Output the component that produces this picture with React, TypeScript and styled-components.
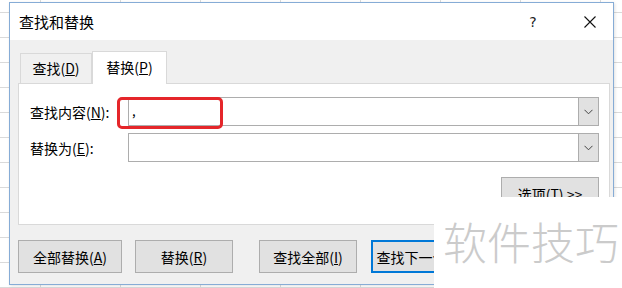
import React from "react";
import styled, { createGlobalStyle } from "styled-components";

const Global = createGlobalStyle`
  html, body { margin: 0; padding: 0; background: #fff; }
  body { width: 622px; height: 288px; overflow: hidden; }
  * { box-sizing: border-box; }
`;

const FONT = `"Noto Sans CJK SC", "Noto Sans", sans-serif`;

const Sheet = styled.div`
  position: relative;
  width: 622px;
  height: 288px;
  overflow: hidden;
  padding: 2px 0 0 9px;
  font-family: ${FONT};
  background-color: #fff;
  background-image:
    repeating-linear-gradient(to right, transparent 0 40px, #dadada 40px 41px, transparent 41px 80px),
    repeating-linear-gradient(to bottom, transparent 0 12px, #dadada 12px 13px, transparent 13px 25px);
`;

const Dialog = styled.div`
  width: 605px;
  height: 283px;
  border: 1px solid #86acd6;
  background: #f0f0f0;
  display: flex;
  flex-direction: column;
  box-shadow: 1px 1px 3px rgba(0, 0, 0, 0.12);
`;

const TitleBar = styled.div`
  height: 37px;
  background: #fff;
  display: flex;
  align-items: center;
  padding-left: 9px;
  flex-shrink: 0;
`;

const Title = styled.div`
  flex: 1;
  font-size: 15px;
  color: #000;
  line-height: 1;
`;

const CaptionButton = styled.div<{ $gap?: number }>`
  width: 46px;
  height: 37px;
  display: flex;
  align-items: center;
  justify-content: center;
  font-size: 14px;
  font-family: "DejaVu Sans", sans-serif;
  color: #222;
  margin-left: ${(p) => p.$gap ?? 0}px;
`;

const TabRow = styled.div`
  height: 43px;
  display: flex;
  align-items: flex-end;
  padding-left: 10px;
  flex-shrink: 0;
`;

const Tab = styled.div<{ $active?: boolean; $width: number }>`
  width: ${(p) => p.$width}px;
  height: ${(p) => (p.$active ? 33 : 30)}px;
  margin-bottom: ${(p) => (p.$active ? -1 : 0)}px;
  position: relative;
  z-index: ${(p) => (p.$active ? 2 : 1)};
  background: ${(p) => (p.$active ? "#fff" : "#f0f0f0")};
  border: 1px solid #d9d9d9;
  border-bottom: none;
  display: flex;
  align-items: center;
  justify-content: center;
  font-size: 14px;
  color: #000;
  padding-bottom: ${(p) => (p.$active ? 3 : 1)}px;
`;

const Panel = styled.div`
  height: 142px;
  margin: 0 3px 0 8px;
  background: #fff;
  border: 1px solid #d9d9d9;
  padding: 13px 10px 0 11px;
  display: flex;
  flex-direction: column;
  flex-shrink: 0;
  overflow: hidden;
`;

const FieldGrid = styled.div`
  display: grid;
  grid-template-columns: 98px 1fr;
  row-gap: 7px;
  align-items: center;
`;

const Label = styled.div`
  font-size: 14px;
  color: #000;
  white-space: nowrap;
`;

const Combo = styled.div`
  height: 29px;
  border: 1px solid #adadad;
  background: #fff;
  display: flex;
`;

const ComboText = styled.div`
  flex: 1;
  font-size: 13px;
  padding-left: 3px;
  line-height: 26px;
  color: #000;
`;

const ComboArrow = styled.div`
  width: 20px;
  background: #e1e1e1;
  border-left: 1px solid #adadad;
  display: flex;
  align-items: center;
  justify-content: center;
`;

const OptionsRow = styled.div`
  display: flex;
  justify-content: flex-end;
  margin-top: 15px;
`;

const Button = styled.div<{ $width: number; $default?: boolean; $gap?: number }>`
  width: ${(p) => p.$width}px;
  height: 33px;
  margin-left: ${(p) => p.$gap ?? 0}px;
  background: #e1e1e1;
  border: ${(p) => (p.$default ? "2px solid #0078d7" : "1px solid #adadad")};
  display: flex;
  align-items: center;
  justify-content: center;
  font-size: 14px;
  color: #000;
  white-space: nowrap;
  flex-shrink: 0;
`;

const ButtonRow = styled.div`
  display: flex;
  margin-top: 15px;
  padding-left: 8px;
`;

const Highlight = styled.div`
  position: absolute;
  left: 117px;
  top: 97px;
  width: 106px;
  height: 32px;
  border: 3px solid #e5262a;
  border-radius: 5px;
  z-index: 5;
`;

const Watermark = styled.div`
  position: absolute;
  left: 434px;
  top: 197px;
  right: 0;
  bottom: 0;
  background: #fff;
  z-index: 6;
  padding: 18px 0 0 9px;
  font-family: ${FONT};
  font-size: 44px;
  font-weight: 300;
  line-height: 1.2;
  color: #cbcbcb;
  white-space: nowrap;
`;

const Chevron = () => (
  <svg width="9" height="6" viewBox="0 0 9 6">
    <path d="M0.5 0.8 L4.5 4.8 L8.5 0.8" fill="none" stroke="#444" strokeWidth="1" />
  </svg>
);

const CloseIcon = () => (
  <svg width="12" height="12" viewBox="0 0 12 12">
    <path d="M0.5 0.5 L11.5 11.5 M11.5 0.5 L0.5 11.5" stroke="#111" strokeWidth="1.1" />
  </svg>
);

export default function App() {
  return (
    <>
      <Global />
      <Sheet>
        <Dialog>
          <TitleBar>
            <Title>查找和替换</Title>
            <CaptionButton>?</CaptionButton>
            <CaptionButton $gap={11}>
              <CloseIcon />
            </CaptionButton>
          </TitleBar>
          <TabRow>
            <Tab $width={72}>
              查找(<u>D</u>)
            </Tab>
            <Tab $width={75} $active>
              替换(<u>P</u>)
            </Tab>
          </TabRow>
          <Panel>
            <FieldGrid>
              <Label>
                查找内容(<u>N</u>):
              </Label>
              <Combo>
                <ComboText>,</ComboText>
                <ComboArrow>
                  <Chevron />
                </ComboArrow>
              </Combo>
              <Label>
                替换为(<u>E</u>):
              </Label>
              <Combo>
                <ComboText />
                <ComboArrow>
                  <Chevron />
                </ComboArrow>
              </Combo>
            </FieldGrid>
            <OptionsRow>
              <Button $width={98}>
                选项(<u>T</u>) &gt;&gt;
              </Button>
            </OptionsRow>
          </Panel>
          <ButtonRow>
            <Button $width={104}>
              全部替换(<u>A</u>)
            </Button>
            <Button $width={98} $gap={13}>
              替换(<u>R</u>)
            </Button>
            <Button $width={98} $gap={26}>
              查找全部(<u>I</u>)
            </Button>
            <Button $width={98} $gap={14} $default>
              查找下一个(<u>F</u>)
            </Button>
          </ButtonRow>
        </Dialog>
        <Highlight />
        <Watermark>软件技巧</Watermark>
      </Sheet>
    </>
  );
}
